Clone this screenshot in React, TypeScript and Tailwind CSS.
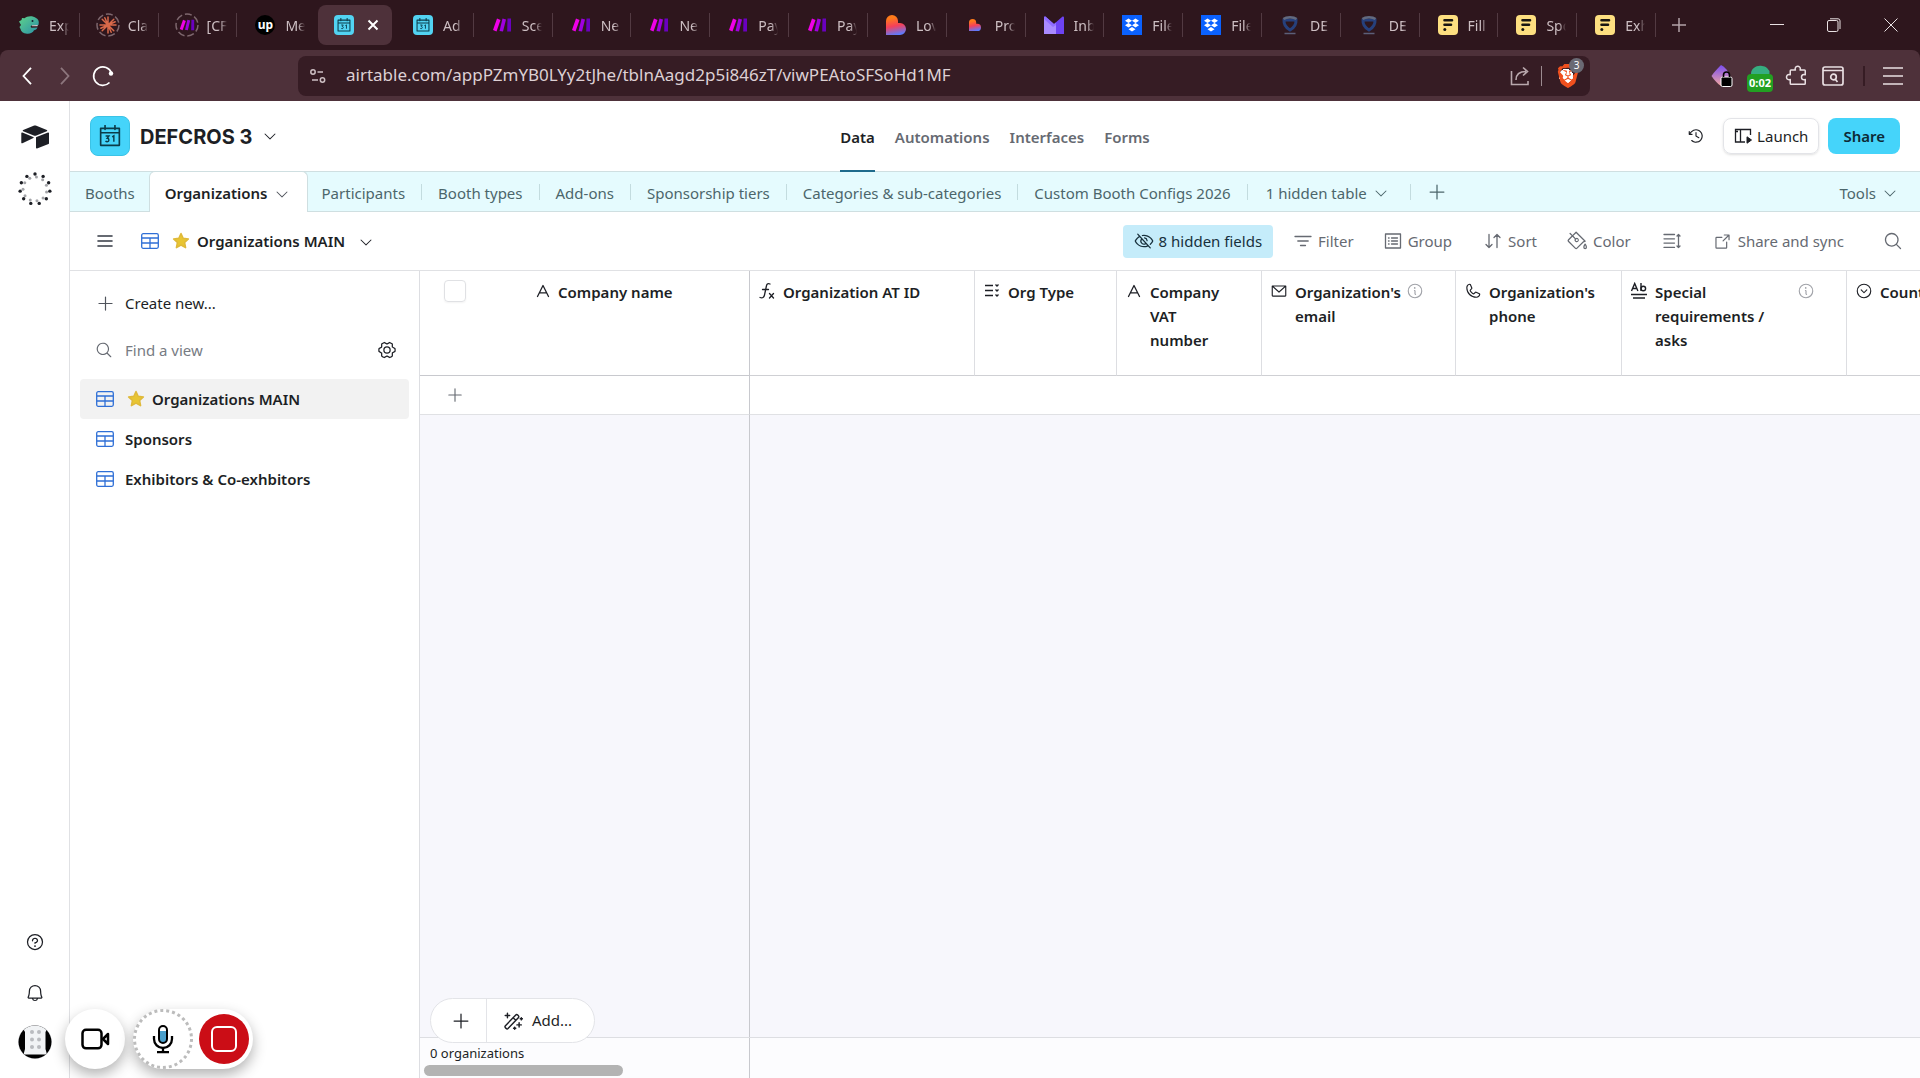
import type { ReactNode } from "react";
import {
  PiArrowSquareOut,
  PiBell,
  PiCaretCircleDown,
  PiCaretDown,
  PiClockCounterClockwise,
  PiEnvelopeSimple,
  PiEyeSlash,
  PiGearSix,
  PiInfo,
  PiListBold,
  PiMagnifyingGlass,
  PiPaintBucket,
  PiPhone,
  PiPlus,
  PiPuzzlePiece,
  PiQuestion,
} from "react-icons/pi";
import { SiBrave } from "react-icons/si";

/* ---------- favicons ---------- */

function Dino() {
  return (
    <svg viewBox="0 0 20 20" className="size-5" aria-hidden="true">
      <defs>
        <linearGradient id="dino" x1="0" y1="0" x2="1" y2="1">
          <stop offset="0" stopColor="#5fd38a" />
          <stop offset="1" stopColor="#2a8fa8" />
        </linearGradient>
      </defs>
      <path
        d="M0 6.500 2.500 5 3 3l2.500.3C8 .8 14 .6 17 3c1.800.8 2.800 2.500 2.800 4.500L19.500 10l-6.500.2-1.500 1.600 1 1 6-.3c-.8 1.800-2 2.500-3.500 2.700-1 2.500-4 3.800-7 3.500C4 18.500 2 16.500 1.500 14l-1-2L2 10z"
        fill="url(#dino)"
      />
      <path d="m13 10.200 1 1.600 1-1.600 1 1.600 1-1.600 1 1.600.8-1.700z" fill="#fff" />
      <circle cx="13.500" cy="6" r="1" fill="#123" />
    </svg>
  );
}

function LoadingRing({ children }: { children: ReactNode }) {
  return (
    <span className="grid size-6 place-items-center">
      <svg viewBox="0 0 24 24" className="col-start-1 row-start-1 size-6" aria-hidden="true">
        <circle cx="12" cy="12" r="11" fill="none" stroke="#7d666d" strokeWidth="1.500" strokeDasharray="7 2.870" />
      </svg>
      <span className="col-start-1 row-start-1">{children}</span>
    </span>
  );
}

function Burst() {
  return (
    <svg viewBox="0 0 18 18" className="size-[18px]" stroke="#d9694a" strokeWidth="1.500" strokeLinecap="round" aria-hidden="true">
      <path d="M9 1v16M1 9h16M3.200 3.200l11.600 11.600M14.800 3.200 3.200 14.800M5.800 1.800l6.400 14.400M1.800 12.200l14.400-6.400" />
    </svg>
  );
}

function Make({ className = "h-[14px] w-5" }: { className?: string }) {
  return (
    <svg viewBox="0 0 20 14" className={className} aria-hidden="true">
      <path d="M5 .5 8.500 2 4.500 13.500 1 12z" fill="#f000e8" />
      <path d="M10.500.5 14 1.500l-3 12L7.500 13z" fill="#a000e0" />
      <path d="M15.500.5H19v13h-3.800z" fill="#6a00c0" />
    </svg>
  );
}

function Upwork() {
  return (
    <span className="grid size-5 place-items-center rounded-full bg-black text-[12px] leading-none font-bold text-white">
      up
    </span>
  );
}

function CalendarGlyph({ className }: { className: string }) {
  return (
    <svg viewBox="0 0 20 20" className={className} fill="none" stroke="#0b3c4a" strokeWidth="1.500" aria-hidden="true">
      <path d="M1.500 3h17v15.500h-17zM1.500 7h17M5.500.5V4M14.500.5V4" strokeLinejoin="round" strokeLinecap="round" />
      <path d="M6 10h3l-1.500 2c2 0 2 3.200 0 3.200-.8 0-1.200-.2-1.600-.6M12 10.800l1.500-1v5.500" strokeWidth="1.300" />
    </svg>
  );
}

function CalendarFav() {
  return (
    <span className="grid size-5 place-items-center rounded-sm bg-[#52d3f2]">
      <CalendarGlyph className="size-[14px]" />
    </span>
  );
}

function Lovable({ className }: { className: string }) {
  return (
    <svg viewBox="0 0 20 20" className={className} aria-hidden="true">
      <defs>
        <linearGradient id="heart" x1=".3" y1="0" x2=".5" y2="1">
          <stop offset="0.150" stopColor="#ff7a1a" />
          <stop offset="0.550" stopColor="#f5405a" />
          <stop offset="1" stopColor="#5b7bff" />
        </linearGradient>
      </defs>
      <path d="M0 6a6 6 0 0 1 12 0v2h2a6 6 0 0 1 0 12H0z" fill="url(#heart)" />
    </svg>
  );
}

function MailFav() {
  return (
    <svg viewBox="0 0 20 18" className="h-[18px] w-5" aria-hidden="true">
      <path d="M0 1.500C0 .5 1 .2 2 1l8 7 8-7c1-.8 2-.5 2 .5V18H0z" fill="#6d43f2" />
      <path d="M0 1.500C0 .5 1 .2 2 1l8 7 2-1.500V18H0z" fill="#8f6dff" />
      <path d="M0 3l9 8 3-2v9H0z" fill="#a98bff" />
    </svg>
  );
}

function Dropbox() {
  return (
    <span className="grid size-5 place-items-center bg-[#0a61fe]">
      <svg viewBox="0 0 16 14" className="h-[14px] w-4" fill="#fff" aria-hidden="true">
        <path d="m4.500.5 3.500 2.200-3.500 2.200L1 2.700zM11.500.5 15 2.700l-3.500 2.200L8 2.700zM4.500 5 8 7.200 4.500 9.400 1 7.200zM11.500 5 15 7.200l-3.500 2.200L8 7.200zM8 9l3.500 2.200L8 13.400l-3.500-2.200z" />
      </svg>
    </span>
  );
}

function Shield() {
  return (
    <svg viewBox="0 0 18 20" className="h-5 w-[18px]" fill="none" aria-hidden="true">
      <path d="M3 5h12c.3 4.500-2.500 8-6 10C5.500 13 2.700 9.500 3 5z" stroke="#26407c" strokeWidth="3" />
      <path d="M2.500 4C5.500 1.500 12.500 1.500 15.500 4" stroke="#626a80" strokeWidth="2.500" />
      <path d="M3.500 18.500h11" stroke="#5c5f78" strokeWidth="1.500" />
    </svg>
  );
}

function FilloutFav() {
  return (
    <span className="grid size-5 place-items-center rounded-sm bg-[#fddf80]">
      <svg viewBox="0 0 12 14" className="h-[14px] w-3" aria-hidden="true">
        <path d="M2.500 2.200H10M2.500 6.800H9" stroke="#171512" strokeWidth="2.600" strokeLinecap="round" />
        <circle cx="2.800" cy="11.600" r="1.500" fill="#171512" />
      </svg>
    </span>
  );
}

/* ---------- app icons ---------- */

function AirtableMark() {
  return (
    <svg viewBox="0 0 28 24" className="h-6 w-7" fill="#1d1f25" aria-hidden="true">
      <path d="M12.600.8 2.200 5c-.6.3-.6 1 0 1.300l10.500 4.100c.9.400 1.800.4 2.700 0l10.400-4.100c.6-.3.6-1 0-1.300L15.400.8c-.9-.4-1.900-.4-2.800 0z" />
      <path d="M15 12.600v10.200c0 .5.5.8 1 .6l11.500-4.500c.3-.1.500-.3.500-.6V8.100c0-.5-.5-.8-1-.6L15.500 12c-.3.100-.5.3-.5.600z" />
      <path d="m12.300 13.100-3.500 1.700-7.400 3.500c-.5.200-1.100-.1-1.100-.6V8.100c0-.2.100-.3.200-.4.300-.2.500-.3.900-.1l10.800 4.300c.600.2.700.9.100 1.200z" />
    </svg>
  );
}

function DottedSpinner() {
  const dots = Array.from({ length: 11 }, (_, i) => (i * 2 * Math.PI) / 11);
  return (
    <svg viewBox="0 0 34 34" className="size-[34px]" aria-hidden="true">
      {dots.map((a) => (
        <circle key={a} cx={17 + 12 * Math.sin(a + 0.12)} cy={17 - 12 * Math.cos(a + 0.12)} r="1.500" fill="#a3a4a8" />
      ))}
      {dots.map((a) => (
        <circle key={a} cx={17 + 15 * Math.sin(a)} cy={17 - 15 * Math.cos(a)} r="1.700" fill="#1d1f25" />
      ))}
    </svg>
  );
}

function GridIcon() {
  return (
    <svg viewBox="0 0 18 16" className="h-4 w-[18px] shrink-0" fill="none" stroke="#2f6fd6" strokeWidth="1.300" aria-hidden="true">
      <rect x=".7" y=".7" width="16.600" height="14.600" rx="1.500" />
      <path d="M1 5h16M1 10h16M9 5v10" />
    </svg>
  );
}

function Star() {
  return (
    <svg viewBox="0 0 18 18" className="size-[18px] shrink-0" aria-hidden="true">
      <path
        d="m9 1.500 2.200 4.800 5.200.6-3.800 3.600 1 5.200L9 13.200l-4.600 2.500 1-5.200L1.600 6.900l5.200-.6z"
        fill="#e8c532"
        stroke="#dfb93a"
        strokeWidth="1.500"
        strokeLinejoin="round"
      />
    </svg>
  );
}

function LineIcon({ d, className = "size-[18px]" }: { d: string; className?: string }) {
  return (
    <svg
      viewBox="0 0 18 18"
      className={`${className} shrink-0`}
      fill="none"
      stroke="currentColor"
      strokeWidth="1.300"
      strokeLinecap="round"
      strokeLinejoin="round"
      aria-hidden="true"
    >
      <path d={d} />
    </svg>
  );
}

const FILTER = "M1 4.500h16M3.800 9h10.400M6.500 13.500h5";
const GROUP = "M1.500 2h15v14h-15zM4.500 6h.6M4.500 9h.6M4.500 12h.6M7.500 6h6M7.500 9h6M7.500 12h6";
const SORT = "M5 2.500v13M5 15.500l-3-3M5 15.500l3-3M13 15.500v-13M13 2.500l-3 3M13 2.500l3 3";
const HEIGHT = "M1 2.500h10.500M1 6.800h10.500M1 11.100h10.500M1 15.400h10.500M15.500 2.500v13M14 4l1.500-1.500L17 4M14 14l1.500 1.500L17 14";
const TEXT_A = "M3.500 14.500 9 3.500l5.500 11M5.500 10.800h7";
const WAND = "m2 13.500 9.500-10c1-1 3.500 1.200 2.500 2.300l-9.500 10c-1 1-3.500-1.200-2.500-2.300zM9 6l2.600 2.400M4 2v4M2 4h4M14.500 10.500v4M12.500 12.500h4M16.500 6v2M15.500 7h2M10.500 14.500v2M9.500 15.500h2";

function LaunchIcon() {
  return (
    <svg viewBox="0 0 18 18" className="size-[18px]" fill="none" stroke="#1d1f25" strokeWidth="1.300" aria-hidden="true">
      <path d="M11 15H1.500V2.500h15V8M6.500 2.500V15M1.500 4.500H4" />
      <path d="m13 9.800 4.500 3.200L13 16.200z" fill="#1d1f25" strokeWidth="1" strokeLinejoin="round" />
    </svg>
  );
}

function FormulaIcon() {
  return (
    <svg viewBox="0 0 18 18" className="size-[18px] shrink-0" fill="none" stroke="currentColor" strokeWidth="1.300" strokeLinecap="round" aria-hidden="true">
      <path d="M12 2C9.500.8 8.700 2.500 8.300 4.500L6.500 13c-.5 2.500-2 3.500-4.500 2.500M4.500 7.500h6M11.500 11.500l4 4.500M15.500 11.500l-4 4.500" />
    </svg>
  );
}

function MultiSelectIcon() {
  return (
    <svg viewBox="0 0 18 18" className="size-[18px] shrink-0" fill="none" stroke="currentColor" strokeWidth="1.300" aria-hidden="true">
      <path d="M2 3.500h8M2 8.500h8M2 13.500h8M12.500 2.500 14 4l1.500-1.500M12.500 7.500 14 9l1.500-1.500M12.500 12.500 14 14l1.500-1.500" />
    </svg>
  );
}

function LongTextIcon() {
  return (
    <svg viewBox="0 0 18 18" className="size-[18px] shrink-0" fill="none" stroke="currentColor" strokeWidth="1.400" aria-hidden="true">
      <path d="m1.500 9 3.200-7.500L7.900 9M2.700 6.500h4M11 1v8" />
      <circle cx="13.300" cy="6.500" r="2.300" />
      <path d="M1 12.500h16M3 16h12" />
    </svg>
  );
}

/* ---------- browser chrome ---------- */

const browserTabs: { icon: ReactNode; label: string; active?: boolean; id: number }[] = [
  { icon: <Dino />, label: "Exp" },
  { icon: <LoadingRing><Burst /></LoadingRing>, label: "Cla" },
  { icon: <LoadingRing><Make className="h-3 w-4" /></LoadingRing>, label: "[CF" },
  { icon: <Upwork />, label: "Me" },
  { icon: <CalendarFav />, label: "DEFCROS 3", active: true },
  { icon: <CalendarFav />, label: "Ad" },
  { icon: <Make />, label: "Sce" },
  { icon: <Make />, label: "Ne" },
  { icon: <Make />, label: "Ne" },
  { icon: <Make />, label: "Pay" },
  { icon: <Make />, label: "Pay" },
  { icon: <Lovable className="size-5" />, label: "Lov" },
  { icon: <span className="grid size-5 place-items-center"><Lovable className="size-3" /></span>, label: "Pro" },
  { icon: <MailFav />, label: "Inb" },
  { icon: <Dropbox />, label: "File" },
  { icon: <Dropbox />, label: "File" },
  { icon: <Shield />, label: "DE" },
  { icon: <Shield />, label: "DE" },
  { icon: <FilloutFav />, label: "Fill" },
  { icon: <FilloutFav />, label: "Spo" },
  { icon: <FilloutFav />, label: "Exh" },
].map((t, id) => ({ ...t, id }));

function BrowserTab({ tab }: { tab: (typeof browserTabs)[number] }) {
  if (tab.active) {
    return (
      <div className="flex pr-[3px] pl-[2px]">
        <div className="flex h-10 flex-1 items-center gap-[13px] rounded-lg bg-[#4e313a] pl-4">
          <span className="grid w-5 place-items-center">{tab.icon}</span>
          <button aria-label="Close tab" className="text-white">
            <svg viewBox="0 0 12 12" className="size-3" stroke="currentColor" strokeWidth="2" aria-hidden="true">
              <path d="m1.500 1.500 9 9M10.500 1.500l-9 9" />
            </svg>
          </button>
        </div>
      </div>
    );
  }
  const beforeActive = tab.id === 3;
  return (
    <button
      className={`flex h-full items-center ${beforeActive ? "" : "bg-[linear-gradient(#523a42,#523a42)] bg-[length:1px_24px] bg-[position:right_center] bg-no-repeat"} pl-4`}
    >
      <span className="flex w-6 shrink-0 justify-center">{tab.icon}</span>
      <span className="ml-2 w-5 overflow-hidden text-left text-[14px] whitespace-nowrap text-[#cdbfc3] [mask-image:linear-gradient(to_right,black_65%,transparent)]">
        {tab.label}
      </span>
    </button>
  );
}

function BrowserChrome() {
  return (
    <header className="shrink-0 bg-[#2e161d]">
      <div className="flex h-[50px] items-center">
        <nav className="grid h-full min-w-0 flex-1 grid-cols-[repeat(21,minmax(0,1fr))] items-center pl-px" aria-label="Browser tabs">
          {browserTabs.map((t) => (
            <BrowserTab key={t.id} tab={t} />
          ))}
        </nav>
        <div className="flex w-[264px] shrink-0 items-center text-[#e9e1e3]">
          <button aria-label="New tab" className="ml-4 text-[#b3a3a8]">
            <svg viewBox="0 0 14 14" className="size-[14px]" stroke="currentColor" strokeWidth="1.500" aria-hidden="true">
              <path d="M7 0v14M0 7h14" />
            </svg>
          </button>
          <div className="ml-auto flex items-center gap-[43px] pr-[22px]">
            <button aria-label="Minimize">
              <svg viewBox="0 0 14 14" className="size-[14px]" stroke="currentColor" aria-hidden="true">
                <path d="M0 6.500h14" />
              </svg>
            </button>
            <button aria-label="Restore">
              <svg viewBox="0 0 14 14" className="size-[14px]" fill="none" stroke="currentColor" aria-hidden="true">
                <rect x=".5" y="2.500" width="10.500" height="11" rx="1.500" />
                <path d="M3 .8h8a2 2 0 0 1 2 2V11" />
              </svg>
            </button>
            <button aria-label="Close window">
              <svg viewBox="0 0 14 14" className="size-[14px]" stroke="currentColor" aria-hidden="true">
                <path d="m.5.5 13 13M13.500.5l-13 13" />
              </svg>
            </button>
          </div>
        </div>
      </div>
      <div className="flex h-[51px] items-center rounded-t-lg bg-[#4e313a] text-[#e9dfe2]">
        <div className="flex w-[298px] shrink-0 items-center gap-7 pl-[22px]">
          <button aria-label="Back">
            <svg viewBox="0 0 10 18" className="h-[18px] w-[10px]" fill="none" stroke="#fff" strokeWidth="1.800" aria-hidden="true">
              <path d="M9 .8 1.500 9 9 17.200" />
            </svg>
          </button>
          <button aria-label="Forward">
            <svg viewBox="0 0 10 18" className="h-[18px] w-[10px]" fill="none" stroke="#8d767d" strokeWidth="1.800" aria-hidden="true">
              <path d="M1 .8 8.500 9 1 17.200" />
            </svg>
          </button>
          <button aria-label="Reload" className="-ml-[6px]">
            <svg viewBox="0 0 22 22" className="size-[22px]" fill="none" stroke="#fff" strokeWidth="1.700" aria-hidden="true">
              <path d="M17.500 17.500A9.200 9.200 0 1 1 19.500 8" />
              <circle cx="19" cy="8.500" r="2.200" fill="#fff" stroke="none" />
            </svg>
          </button>
        </div>
        <div className="flex h-10 min-w-0 flex-1 items-center rounded-lg bg-[#361c24] pr-[14px] pl-3">
          <button aria-label="Site information">
            <svg viewBox="0 0 16 16" className="size-4" fill="none" stroke="#cdbfc3" strokeWidth="1.500" aria-hidden="true">
              <circle cx="3" cy="4" r="2.200" />
              <path d="M7.500 4H13M2 12h6" />
              <circle cx="12.500" cy="12" r="2.200" />
            </svg>
          </button>
          <input
            aria-label="Address"
            readOnly
            value="airtable.com/appPZmYB0LYy2tJhe/tblnAagd2p5i846zT/viwPEAtoSFSoHd1MF"
            className="ml-5 h-full min-w-0 flex-1 bg-transparent pb-[2px] text-[17px] text-[#ddd0d4] outline-none"
          />
          <button aria-label="Share page">
            <svg viewBox="0 0 20 20" className="size-5" fill="none" stroke="#b9a8ad" strokeWidth="1.600" aria-hidden="true">
              <path d="M1.500 5v13.500H18V15M6 14c0-5 3-8.500 10-8.500M13 1.500l4.500 4-4.500 4" />
            </svg>
          </button>
          <span className="mr-[14px] ml-[11px] h-5 w-px bg-[#9c8b90]" />
          <button aria-label="Brave Shields" className="relative">
            <span className="grid h-6 w-5 place-items-center bg-[radial-gradient(circle,white_45%,transparent_46%)]">
              <SiBrave className="size-6 shrink-0 text-[#f0501e]" />
            </span>
            <span className="absolute -top-[6px] left-[13px] grid size-[15px] place-items-center rounded-full bg-[#6a6a74] text-[10px] leading-none text-white">
              3
            </span>
          </button>
        </div>
        <div className="flex w-[330px] shrink-0 items-center justify-end pr-[17px]">
          <button aria-label="Wallet lock">
            <svg viewBox="0 0 22 24" className="h-6 w-[22px]" aria-hidden="true">
              <defs>
                <linearGradient id="gem" x1="0" y1="0" x2="0" y2="1">
                  <stop offset="0" stopColor="#7a4df0" />
                  <stop offset="1" stopColor="#f3a8a0" />
                </linearGradient>
              </defs>
              <path d="M10 1c4 2 7 6 9 10-2 5-5 8-9 11-3-2-7-6-9.500-10C3 8 7 4 10 1z" fill="url(#gem)" />
              <rect x="10" y="13" width="11" height="9.500" rx="1.500" fill="#000" stroke="#fff" strokeWidth="1" />
              <path d="M12.500 13v-2a3 3 0 0 1 6 0v2" fill="none" stroke="#000" strokeWidth="1.600" />
            </svg>
          </button>
          <button aria-label="Recording timer" className="ml-[14px] grid justify-items-center pt-[6px]">
            <svg viewBox="0 0 20 9" className="h-[9px] w-5" aria-hidden="true">
              <path d="M1 9C1 3 7 0 12 1c4 0 6 3 7.500 5v3z" fill="#36ad80" />
            </svg>
            <span className="rounded bg-[#22a022] px-[2px] text-[11px] leading-[18px] font-bold text-white">0:02</span>
          </button>
          <button aria-label="Extensions" className="ml-3">
            <PiPuzzlePiece className="size-6" />
          </button>
          <button aria-label="Search tabs" className="ml-[13px]">
            <svg viewBox="0 0 22 20" className="h-5 w-[22px]" fill="none" stroke="currentColor" strokeWidth="1.700" aria-hidden="true">
              <rect x="1" y="1" width="20" height="18" rx="2" />
              <path d="M1 4.500h20M13.500 13.500l2 2.500" />
              <circle cx="11.500" cy="11" r="2.800" />
            </svg>
          </button>
          <span className="mr-[18px] ml-[19px] h-5 w-[2px] bg-[#361c24]" />
          <button aria-label="Menu">
            <svg viewBox="0 0 20 18" className="h-[18px] w-5" stroke="currentColor" strokeWidth="1.700" aria-hidden="true">
              <path d="M0 1h20M0 9h20M0 17h20" />
            </svg>
          </button>
        </div>
      </div>
    </header>
  );
}

/* ---------- app shell ---------- */

function Rail() {
  return (
    <aside className="flex w-[70px] shrink-0 flex-col items-center border-r border-[#e0e1e4] bg-white">
      <a href="#home" aria-label="Home" className="mt-6">
        <AirtableMark />
      </a>
      <span className="mt-[23px]">
        <DottedSpinner />
      </span>
      <button aria-label="Help" className="mt-auto">
        <PiQuestion className="size-5" />
      </button>
      <button aria-label="Notifications" className="mt-[31px]">
        <PiBell className="size-5" />
      </button>
      <button aria-label="Account" className="mt-[22px] mb-[19px]">
        <svg viewBox="0 0 34 34" className="size-[34px]" aria-hidden="true">
          <defs>
            <clipPath id="avatar">
              <circle cx="17" cy="17" r="16.500" />
            </clipPath>
          </defs>
          <circle cx="17" cy="17" r="17" fill="#e4e5e8" />
          <g clipPath="url(#avatar)">
            <path d="M0 0h34v34H0z" fill="#000" />
            <path d="M3 0h28l-3.500 7v17L29 29.500H5.500L7 24V7z" fill="#f1f3f5" />
          </g>
          <g fill="#b9bbbf">
            <circle cx="14" cy="7" r="2" />
            <circle cx="21" cy="7" r="2" />
            <circle cx="14" cy="14.500" r="2" />
            <circle cx="21" cy="14.500" r="2" />
            <circle cx="14" cy="22" r="2" />
            <circle cx="21" cy="22" r="2" />
          </g>
        </svg>
      </button>
    </aside>
  );
}

function BaseHeader() {
  return (
    <div className="grid h-[70px] shrink-0 grid-cols-[1fr_auto_1fr] items-center bg-white pr-5 pl-5">
      <div className="flex items-center">
        <span className="grid size-10 place-items-center rounded-lg border border-[#3bc3e6] bg-[#45d4fa]">
          <CalendarGlyph className="size-[22px]" />
        </span>
        <button className="ml-[10px] flex items-center gap-[10px]">
          <h1 className="pt-px font-[Inter] text-[20px] font-bold">DEFCROS 3</h1>
          <PiCaretDown className="size-4" />
        </button>
      </div>
      <nav className="flex h-full gap-5 text-[15px] font-semibold text-[#666a72]" aria-label="Base sections">
        <a href="#data" className="relative flex items-center pt-[2px] text-[#1d1f25]">
          Data
          <span className="absolute inset-x-0 -bottom-px h-[2px] bg-[#1f6b8c]" />
        </a>
        {["Automations", "Interfaces", "Forms"].map((t) => (
          <a key={t} href={`#${t}`} className="flex items-center pt-[2px]">
            {t}
          </a>
        ))}
      </nav>
      <div className="flex items-center justify-end">
        <button aria-label="Base history" className="mr-[18px]">
          <PiClockCounterClockwise className="size-[18px]" />
        </button>
        <button className="flex h-9 items-center gap-[5px] rounded-lg border border-[#e3e4e8] px-[10px] text-[15px] shadow-sm">
          <LaunchIcon />
          Launch
        </button>
        <button className="ml-[9px] h-9 rounded-lg bg-[#45d4fa] px-[15px] pt-px text-[15px] font-semibold text-[#0d2a36]">
          Share
        </button>
      </div>
    </div>
  );
}

const tableTabs = ["Participants", "Booth types", "Add-ons", "Sponsorship tiers", "Categories & sub-categories", "Custom Booth Configs 2026"];
const divider = "bg-[linear-gradient(#c3dcdf,#c3dcdf)] bg-[length:1px_16px] bg-[position:right_center] bg-no-repeat";

function TableTabs() {
  return (
    <nav
      aria-label="Tables"
      className="flex h-[41px] shrink-0 items-stretch border-y border-[#cfdfe1] bg-[#e5fbfe] text-[15px] whitespace-nowrap text-[#4c666b]"
    >
      <button className="pt-[3px] pr-[14px] pl-[15px]">Booths</button>
      <button className="-my-px flex items-center gap-[6px] rounded-t-md border-x border-t border-[#cfdfe1] bg-white pt-[3px] pr-[17px] pl-[15px] font-semibold text-[#1d1f25]">
        Organizations
        <PiCaretDown className="size-4 text-[#50545c]" />
      </button>
      {tableTabs.map((t, i) => (
        <button key={t} className={`pt-[3px] pr-[17px] ${i === 0 ? "pl-[14px]" : "pl-4"} ${divider}`}>
          {t}
        </button>
      ))}
      <button className={`flex items-center gap-[6px] pt-[3px] pr-[22px] pl-[18px] ${divider}`}>
        1 hidden table
        <PiCaretDown className="size-4" />
      </button>
      <button aria-label="Add table" className="px-4">
        <PiPlus className="size-5" />
      </button>
      <button className="ml-auto flex items-center gap-[6px] pt-[3px] pr-[22px]">
        Tools
        <PiCaretDown className="size-4" />
      </button>
    </nav>
  );
}

function ViewBar() {
  return (
    <div className="flex h-[59px] shrink-0 items-center border-b border-[#e0e1e4] bg-white text-[15px] whitespace-nowrap text-[#666a72]">
      <button aria-label="Toggle sidebar" className="ml-[25px]">
        <PiListBold className="size-5" />
      </button>
      <button className="ml-[26px] flex items-center font-semibold text-[#1d1f25]">
        <GridIcon />
        <span className="ml-[13px]">
          <Star />
        </span>
        <span className="ml-[7px]">Organizations MAIN</span>
        <PiCaretDown className="mt-[2px] ml-[13px] size-4" />
      </button>
      <div className="ml-auto flex items-center pr-[17px]">
        <button className="flex h-[33px] items-center gap-[5px] rounded bg-[#c5ecfa] px-[11px] text-[#17303c]">
          <PiEyeSlash className="size-5" />8 hidden fields
        </button>
        <button className="ml-[21px] flex items-center gap-[6px]">
          <LineIcon d={FILTER} />
          Filter
        </button>
        <button className="ml-[30px] flex items-center gap-[6px]">
          <LineIcon d={GROUP} />
          Group
        </button>
        <button className="ml-8 flex items-center gap-[6px]">
          <LineIcon d={SORT} />
          Sort
        </button>
        <button className="ml-[30px] flex items-center gap-[6px]">
          <PiPaintBucket className="size-5" />
          Color
        </button>
        <button aria-label="Row height" className="ml-8">
          <LineIcon d={HEIGHT} />
        </button>
        <button className="ml-8 flex items-center gap-[6px]">
          <PiArrowSquareOut className="size-[19px]" />
          Share and sync
        </button>
        <button aria-label="Search records" className="ml-[39px]">
          <PiMagnifyingGlass className="size-5" />
        </button>
      </div>
    </div>
  );
}

function Sidebar() {
  return (
    <aside className="w-[350px] shrink-0 border-r border-[#dddee2] bg-white px-[10px] pt-[9px] text-[15px]">
      <button className="flex h-[46px] w-full items-center gap-2 pl-4">
        <PiPlus className="size-[19px] text-[#50545c]" />
        <span className="pl-[2px]">Create new...</span>
      </button>
      <div className="flex h-12 items-center pr-[12px] pl-[15px]">
        <PiMagnifyingGlass className="size-[18px] shrink-0 text-[#666a72]" />
        <input
          aria-label="Find a view"
          placeholder="Find a view"
          className="ml-3 h-8 min-w-0 flex-1 bg-transparent outline-none placeholder:text-[#777b83]"
        />
        <button aria-label="View list settings">
          <PiGearSix className="size-5" />
        </button>
      </div>
      <ul className="mt-[5px] font-semibold">
        <li>
          <a href="#main" className="flex h-10 items-center rounded bg-[#f2f2f2] pl-4">
            <GridIcon />
            <span className="ml-[13px]">
              <Star />
            </span>
            <span className="ml-[7px]">Organizations MAIN</span>
          </a>
        </li>
        {["Sponsors", "Exhibitors & Co-exhbitors"].map((v) => (
          <li key={v}>
            <a href={`#${v}`} className="flex h-10 items-center gap-[11px] rounded pl-4">
              <GridIcon />
              {v}
            </a>
          </li>
        ))}
      </ul>
    </aside>
  );
}

const info = <PiInfo className="mt-[2px] size-[18px] shrink-0 text-[#a0a2a8]" />;

const columns: { icon: ReactNode; name: string; w: string; label: string; info?: boolean }[] = [
  { icon: <FormulaIcon />, name: "Organization AT ID", w: "w-[225px]", label: "flex-1" },
  { icon: <MultiSelectIcon />, name: "Org Type", w: "w-[142px]", label: "flex-1" },
  { icon: <LineIcon d={TEXT_A} />, name: "Company VAT number", w: "w-[145px]", label: "w-[74px]" },
  { icon: <PiEnvelopeSimple className="size-[18px] shrink-0" />, name: "Organization's email", w: "w-[194px]", label: "w-[111px]", info: true },
  { icon: <PiPhone className="size-[18px] shrink-0" />, name: "Organization's phone", w: "w-[166px]", label: "w-[111px]" },
  { icon: <LongTextIcon />, name: "Special requirements / asks", w: "w-[225px]", label: "w-[142px]", info: true },
  { icon: <PiCaretCircleDown className="size-[18px] shrink-0" />, name: "Country", w: "w-[200px]", label: "flex-1" },
];

function RecordGrid() {
  return (
    <main className="relative flex min-w-0 flex-1 flex-col overflow-hidden bg-[#f7f7fc]">
      <table className="w-[1627px] table-fixed border-separate border-spacing-0 bg-white text-[15px] leading-6">
        <thead>
          <tr className="h-[105px] align-top">
            <th className="w-[330px] border-r border-b border-[#c8c9ce] p-0 font-semibold">
              <div className="flex items-start pt-[9px] pl-6">
                <input
                  type="checkbox"
                  aria-label="Select all records"
                  className="size-[22px] appearance-none rounded border border-[#e0e1e4] shadow-xs"
                />
                <span className="mt-[2px] ml-[68px]">
                  <LineIcon d={TEXT_A} />
                </span>
                <span className="ml-[6px]">Company name</span>
              </div>
            </th>
            {columns.map((c) => (
              <th key={c.name} className={`${c.w} border-r border-b border-r-[#dddee2] border-b-[#cfd0d4] p-0 text-left font-semibold`}>
                <div className="flex items-start pt-[9px] pl-2">
                  <span className="mt-[2px]">{c.icon}</span>
                  <span className={`${c.label} ml-[7px]`}>{c.name}</span>
                  {c.info && info}
                </div>
              </th>
            ))}
          </tr>
        </thead>
        <tbody>
          <tr className="h-[39px]">
            <td className="border-r border-b border-r-[#c8c9ce] border-b-[#e0e1e4] p-0 pl-[26px]">
              <button aria-label="Add record" className="block">
                <PiPlus className="size-[18px] text-[#666a72]" />
              </button>
            </td>
            <td colSpan={7} className="border-b border-[#e0e1e4]" />
          </tr>
        </tbody>
      </table>
      <div className="w-[330px] flex-1 border-r border-[#c8c9ce]" />
      <footer className="h-[41px] shrink-0 border-t border-[#dddee2] bg-[#fcfcfe]">
        <div className="flex h-full w-[330px] flex-col border-r border-[#c8c9ce] pl-[10px]">
          <span className="pt-1 text-[13px] leading-[23px]">0 organizations</span>
          <span className="-ml-[6px] h-[11px] w-[199px] rounded-full bg-[#b3b3b3]" />
        </div>
      </footer>
      <div className="absolute bottom-[35px] left-[10px] flex h-[45px] items-center rounded-full border border-[#e3e4e8] bg-white text-[15px]">
        <button aria-label="Add record" className="flex h-full w-14 items-center justify-center border-r border-[#e3e4e8] pl-1">
          <PiPlus className="size-5" />
        </button>
        <button className="flex h-full items-center gap-[9px] pr-[22px] pl-4">
          <LineIcon d={WAND} className="size-5" />
          Add...
        </button>
      </div>
    </main>
  );
}

function Recorder() {
  return (
    <div className="absolute bottom-[9px] left-[65px] flex items-center gap-2">
      <button aria-label="Camera" className="grid size-[60px] place-items-center rounded-full bg-white shadow-[0_6px_14px_rgba(0,0,0,0.3)]">
        <svg viewBox="0 0 30 22" className="h-[22px] w-[30px]" fill="none" stroke="#000" strokeWidth="2.500" strokeLinejoin="round" aria-hidden="true">
          <rect x="2.500" y="1.800" width="19" height="18.500" rx="3.500" />
          <path d="m23 11 5-5v10z" />
        </svg>
      </button>
      <div className="flex items-center rounded-full bg-white pr-1 shadow-[0_6px_14px_rgba(0,0,0,0.3)]">
        <button aria-label="Microphone" className="grid size-[60px] place-items-center">
          <svg viewBox="0 0 60 60" className="size-[60px]" fill="none" aria-hidden="true">
            <circle cx="30" cy="30" r="28.500" stroke="#bcbcbc" strokeWidth="3" strokeDasharray="3 2.970" />
            <rect x="26" y="17" width="8" height="17" rx="4" fill="#fff" />
            <path d="M26 22h8v8a4 4 0 0 1-8 0z" fill="#4a9fcb" />
            <rect x="26" y="17" width="8" height="17" rx="4" stroke="#000" strokeWidth="2" />
            <path d="M21 27v3a9 9 0 0 0 18 0v-3M30 39v4M24 43.200h12" stroke="#000" strokeWidth="2.300" />
          </svg>
        </button>
        <button aria-label="Stop recording" className="ml-[6px] grid size-[50px] place-items-center rounded-full bg-[#cb0d16]">
          <span className="size-[26px] rounded-md border-2 border-white" />
        </button>
      </div>
    </div>
  );
}

export default function App() {
  return (
    <div className="flex h-screen flex-col overflow-hidden bg-white font-['Noto_Sans','Open_Sans',sans-serif] text-[#1d1f25]">
      <BrowserChrome />
      <div className="relative flex min-h-0 flex-1">
        <Rail />
        <div className="flex min-w-0 flex-1 flex-col">
          <BaseHeader />
          <TableTabs />
          <ViewBar />
          <div className="flex min-h-0 flex-1">
            <Sidebar />
            <RecordGrid />
          </div>
        </div>
        <Recorder />
      </div>
    </div>
  );
}
